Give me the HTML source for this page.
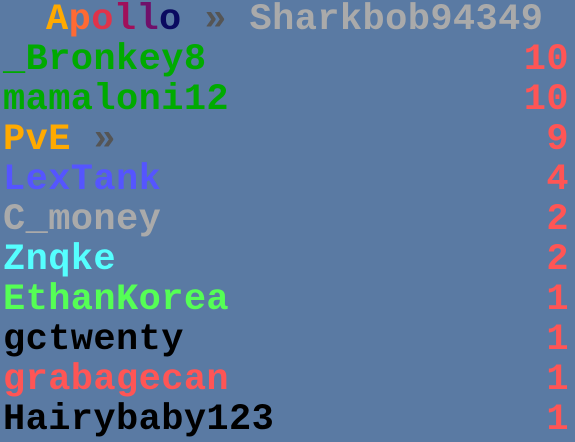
<!DOCTYPE html>
<html><head><meta charset="utf-8"><style>
html,body{margin:0;padding:0}
body{width:575px;height:442px;background:#5a7aa3;position:relative;overflow:hidden;font-family:"Liberation Mono",monospace;font-weight:bold;font-size:37px;letter-spacing:0.4px}
.r{position:absolute;left:3px;right:6px;height:39px;line-height:39px;white-space:pre}
.n{position:absolute;right:0;top:0;color:#ff5555}
</style></head><body>
<div class="r" style="top:1px;left:46px"><span style="color:#ffaa00">A</span><span style="color:#ff6a33">p</span><span style="color:#e0334a">o</span><span style="color:#a0105a">l</span><span style="color:#70106a">l</span><span style="color:#0a0a60">o</span> <span style="color:#555">»</span> <span style="color:#aaaaaa">Sharkbob94349</span></div>
<div class="r" style="top:41px;color:#00aa00">_Bronkey8<span class="n">10</span></div>
<div class="r" style="top:81px;color:#00aa00">mamaloni12<span class="n">10</span></div>
<div class="r" style="top:121px;color:#ffaa00">PvE <span style="color:#555">»</span><span class="n">9</span></div>
<div class="r" style="top:161px;color:#5555ff">LexTank<span class="n">4</span></div>
<div class="r" style="top:201px;color:#aaaaaa">C_money<span class="n">2</span></div>
<div class="r" style="top:241px;color:#55ffff">Znqke<span class="n">2</span></div>
<div class="r" style="top:281px;color:#55ff55">EthanKorea<span class="n">1</span></div>
<div class="r" style="top:321px;color:#000">gctwenty<span class="n">1</span></div>
<div class="r" style="top:361px;color:#ff5555">grabagecan<span class="n">1</span></div>
<div class="r" style="top:401px;color:#000">Hairybaby123<span class="n">1</span></div>
</body></html>
